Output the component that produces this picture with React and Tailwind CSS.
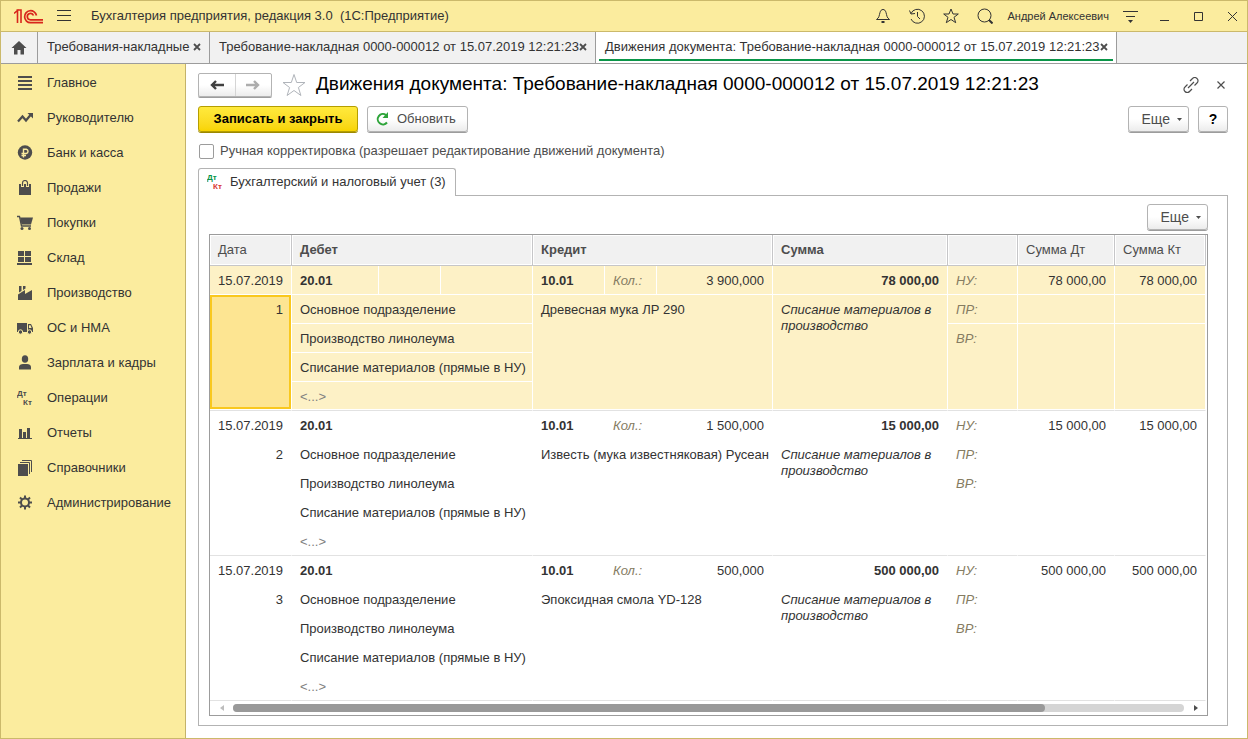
import { useState } from 'react'
import { clsx } from 'clsx'

const ENTRIES = [
  { id: 1, date: '15.07.2019', item: 'Древесная мука ЛР 290', qty: '3 900,000', sum: '78 000,00' },
  { id: 2, date: '15.07.2019', item: 'Известь (мука известняковая) Русеан', qty: '1 500,000', sum: '15 000,00' },
  { id: 3, date: '15.07.2019', item: 'Эпоксидная смола YD-128', qty: '500,000', sum: '500 000,00' },
]

const Icon = ({ size = 16, children, ...rest }) => (
  <svg width={size} height={size} viewBox={`0 0 ${size} ${size}`} fill="none" aria-hidden="true" className="shrink-0" {...rest}>
    {children}
  </svg>
)

const DtKt = ({ dt = '#4d4d4d', kt = '#4d4d4d' }) => (
  <svg
    width="17"
    height="19"
    viewBox="0 0 17 19"
    className="-mr-px shrink-0"
    aria-hidden="true"
    fontFamily="Liberation Sans, Arial, sans-serif"
    fontSize="8"
    fontWeight="700"
  >
    <text x="0" y="8" fill={dt}>Дт</text>
    <text x="6" y="17" fill={kt}>Кт</text>
  </svg>
)

const MENU = [
  {
    label: 'Главное',
    icon: <Icon><path d="M1 1h14v2H1zM1 5h14v2H1zM1 9h14v2H1zM1 13h14v2H1z" fill="#4d4d4d" /></Icon>,
  },
  {
    label: 'Руководителю',
    icon: (
      <Icon>
        <path d="M1 11.500l4.500-5 3.500 4 4.500-5.500" stroke="#4d4d4d" strokeWidth="2.200" />
        <path d="M10.500 3H16v5.500z" fill="#4d4d4d" />
      </Icon>
    ),
  },
  {
    label: 'Банк и касса',
    icon: (
      <Icon>
        <circle cx="8" cy="7.500" r="7.200" fill="#4d4d4d" />
        <path d="M6.500 12.500V4.200h2.800a2.200 2.200 0 010 4.300H4.500M4.500 10.500h4.500" stroke="#fbec9e" strokeWidth="1.400" />
      </Icon>
    ),
  },
  {
    label: 'Продажи',
    icon: (
      <Icon>
        <path d="M2 4h12v11H2z" fill="#4d4d4d" />
        <path d="M5.500 7V3a2.500 2.500 0 015 0v4" stroke="#fbec9e" strokeWidth="3" />
        <path d="M5.500 6V3a2.500 2.500 0 015 0v3" stroke="#4d4d4d" strokeWidth="1.200" />
      </Icon>
    ),
  },
  {
    label: 'Покупки',
    icon: (
      <Icon>
        <path d="M0 1.500h2.500l2 9.500h9.500" stroke="#4d4d4d" strokeWidth="1.300" />
        <path d="M3 2.500h13l-2 7H4.500z" fill="#4d4d4d" />
        <circle cx="5" cy="13.500" r="1.500" fill="#4d4d4d" />
        <circle cx="12.500" cy="13.500" r="1.500" fill="#4d4d4d" />
      </Icon>
    ),
  },
  {
    label: 'Склад',
    icon: <Icon><path d="M1 1h6v5H1zM8 1h6v5H8zM1 7h6v5H1zM8 7h6v5H8zM0 13h15v2H0z" fill="#4d4d4d" /></Icon>,
  },
  {
    label: 'Производство',
    icon: <Icon><path d="M1 15V9.500L8 5v4l7-4v10zM2 1h2.500v5L2 7.500zM6 1h2.500v2.500L6 5z" fill="#4d4d4d" /></Icon>,
  },
  {
    label: 'ОС и НМА',
    icon: (
      <Icon>
        <path d="M0 3h10v9H0zM11 4h3l2 4v4h-5z" fill="#4d4d4d" />
        <path d="M12 5.200h1.500L14.600 8H12z" fill="#fbec9e" />
        <circle cx="3.500" cy="12" r="2.200" fill="#4d4d4d" stroke="#fbec9e" />
        <circle cx="12.500" cy="12" r="2.200" fill="#4d4d4d" stroke="#fbec9e" />
      </Icon>
    ),
  },
  {
    label: 'Зарплата и кадры',
    icon: (
      <Icon>
        <ellipse cx="8" cy="4" rx="3.200" ry="3.800" fill="#4d4d4d" />
        <path d="M2 14.500v-2.500c0-2 2-3 4-3h4c2 0 4 1 4 3v2.500z" fill="#4d4d4d" />
      </Icon>
    ),
  },
  { label: 'Операции', icon: <DtKt /> },
  {
    label: 'Отчеты',
    icon: <Icon><path d="M2 4h3v9H2zM6 7h3v6H6zM10 3h3v10h-3zM1 13h14v1H1z" fill="#4d4d4d" /></Icon>,
  },
  {
    label: 'Справочники',
    icon: (
      <Icon>
        <path d="M1 4h10v12H1z" fill="#4d4d4d" />
        <path d="M3 2.500h9.500V14M5 .5h9.500V12" stroke="#4d4d4d" />
      </Icon>
    ),
  },
  {
    label: 'Администрирование',
    icon: (
      <Icon>
        <circle cx="8" cy="7.500" r="4" stroke="#4d4d4d" strokeWidth="2" />
        <path
          d="M8 .5v3M8 11.500v3M1 7.500h3M12 7.500h3M3 2.500l2.200 2.200M10.800 10.300L13 12.500M3 12.500l2.200-2.200M10.800 4.700L13 2.500"
          stroke="#4d4d4d"
          strokeWidth="2"
        />
      </Icon>
    ),
  },
]

const TABS = [
  { id: 'list', label: 'Требования-накладные', width: 'w-[172px]' },
  { id: 'doc', label: 'Требование-накладная 0000-000012 от 15.07.2019 12:21:23', width: 'w-[386px]' },
  { id: 'moves', label: 'Движения документа: Требование-накладная 0000-000012 от 15.07.2019 12:21:23', width: 'w-[521px]' },
]

const BUTTON =
  'h-[26px] shrink-0 rounded-[3px] border border-[#b3b3b3] bg-linear-to-b from-white from-50% to-[#ececec] shadow-[0_1px_0_#9c9c9c]'

const MoreButton = () => (
  <button className={clsx(BUTTON, 'mb-px flex w-[61px] items-center justify-end gap-[7px] pr-1.5 text-[14px] text-[#4d4d4d]')}>
    Еще
    <svg width="5" height="3" viewBox="0 0 5 3" aria-hidden="true"><path d="M0 0h5L2.500 3z" fill="#4d4d4d" /></svg>
  </button>
)

const TitleBar = () => (
  <header className="flex h-[31px] items-center border-b border-[#cbb96b] bg-[#fbec9e] pr-[7px] pl-[13px]">
    <svg width="30" height="15" viewBox="0 0 30 15" fill="none" stroke="#d8261c" aria-label="1С">
      <path d="M0 4.500L3.500 1.500V14M2.500 1h4.500v13" strokeWidth="1.600" />
      <path d="M22.500 6.500A6 6 0 1016.500 13.700H29" strokeWidth="1.700" />
      <path d="M19.500 6.500A3.200 3.200 0 1016.500 10.800H29" strokeWidth="1.700" />
    </svg>
    <button aria-label="Меню" className="ml-[13px]">
      <Icon><path d="M0 2.500h14M0 7.500h14M0 12.500h14" stroke="#333" /></Icon>
    </button>
    <span className="ml-4.5 flex-1 whitespace-pre text-[13px]">Бухгалтерия предприятия, редакция 3.0  (1С:Предприятие)</span>
    <div className="flex items-center gap-4.5">
      <button aria-label="Уведомления">
        <Icon stroke="#333"><path d="M1.500 11.500h13c-3-2-2.500-4-3.500-7C10.500 2.500 9.500 1.500 8 1.500S5.500 2.500 5 4.500c-1 3-.5 5-3.500 7z" /><path d="M6.500 14h3" strokeWidth="2" /></Icon>
      </button>
      <button aria-label="История">
        <Icon stroke="#333"><path d="M2 5.500A7 7 0 112 11" /><path d="M.5 2.500L2 6l4-.5M8.500 4v4.500L11 11" /></Icon>
      </button>
      <button aria-label="Избранное">
        <Icon stroke="#333"><path d="M8 1l2 5h5.300L11 9.300l1.700 5.400L8 11.500l-4.700 3.200L5 9.300.7 6H6z" /></Icon>
      </button>
      <button aria-label="Поиск">
        <Icon stroke="#333"><circle cx="7.500" cy="7.500" r="6.500" /><path d="M12 12l3.500 3.500" strokeWidth="2" /></Icon>
      </button>
    </div>
    <span className="ml-3.5 text-[11px]">Андрей Алексеевич</span>
    <div className="ml-[13px] flex items-center gap-4.5">
      <button aria-label="Сервис">
        <Icon><path d="M1 3.500h15M4 8.500h9" stroke="#333" /><path d="M6 12h5l-2.500 3z" fill="#333" /></Icon>
      </button>
      <button aria-label="Свернуть"><Icon><path d="M4 12.500h9" stroke="#333" /></Icon></button>
      <button aria-label="Развернуть"><Icon><path d="M4.500 4.500h8v8h-8z" stroke="#333" /></Icon></button>
      <button aria-label="Закрыть"><Icon><path d="M4 4l9 9M13 4l-9 9" stroke="#333" /></Icon></button>
    </div>
  </header>
)

const TabBar = ({ active, onSelect }) => (
  <nav className="flex h-8 border-b border-[#9c9c9c] bg-[#f1f1f1]">
    <button aria-label="Начальная страница" className="flex w-[37px] items-center justify-center border-r border-[#9c9c9c]">
      <Icon><path d="M8 1l7.500 7H13v6.500H9.500V10h-3v4.500H3V8H.5z" fill="#4d4d4d" /></Icon>
    </button>
    {TABS.map((tab) => (
      <div
        key={tab.id}
        className={clsx('flex border-r border-[#9c9c9c] px-[3px] pb-0.5', tab.width, tab.id === active && 'bg-white')}
      >
        <div className={clsx('flex flex-1 items-center justify-between border-b-2 pt-[3px] pr-[5px] pl-1.5', tab.id === active ? 'border-[#0a9548]' : 'border-transparent')}>
          <button onClick={() => onSelect(tab.id)} className="text-[13px] whitespace-nowrap">{tab.label}</button>
          <button aria-label="Закрыть вкладку">
            <Icon size={8}><path d="M1 1l6 6M7 1L1 7" stroke="#4d4d4d" strokeWidth="1.800" /></Icon>
          </button>
        </div>
      </div>
    ))}
  </nav>
)

const Sidebar = () => (
  <nav className="w-[185px] shrink-0 border-r border-[#c4b36a] bg-[#fbec9e] pt-px">
    {MENU.map((item) => (
      <a key={item.label} href="#" className="flex h-[35px] items-center gap-3.5 pl-4 text-[13px]">
        {item.icon}
        {item.label}
      </a>
    ))}
  </nav>
)

const Th = ({ bold, className, ...rest }) => (
  <th
    className={clsx(
      'h-[31px] border-r border-b border-[#c6c6c8] bg-[#f1f1f1] px-2 text-left text-[#4d4d4d] shadow-[inset_0_0_0_1px_#fff]',
      bold ? 'font-bold' : 'font-normal',
      className
    )}
    {...rest}
  />
)

const Td = ({ last, className, ...rest }) => (
  <td
    className={clsx(
      'border-r border-b border-r-white px-2 pt-[7px] pb-[5px] align-top',
      last ? 'border-b-[#e2e2e2] shadow-[inset_0_-1px_0_#fff]' : 'border-b-white',
      className
    )}
    {...rest}
  />
)

const Entry = ({ entry, selected, onSelect }) => {
  const label = 'italic text-[#857c62]'
  return (
    <tbody onClick={onSelect} className={clsx(selected && 'bg-[#fdf1c6]')}>
      <tr>
        <Td className="text-right">{entry.date}</Td>
        <Td className="font-bold">20.01</Td>
        <Td />
        <Td />
        <Td className="font-bold">10.01</Td>
        <Td className={label}>Кол.:</Td>
        <Td className="text-right">{entry.qty}</Td>
        <Td className="text-right font-bold">{entry.sum}</Td>
        <Td className={label}>НУ:</Td>
        <Td className="text-right">{entry.sum}</Td>
        <Td className="text-right">{entry.sum}</Td>
      </tr>
      <tr>
        {selected ? (
          <td
            rowSpan={4}
            className="border-r border-b border-r-white border-b-[#e2e2e2] bg-[#fde592] px-2 pt-[7px] pb-[5px] text-right align-top shadow-[inset_0_-1px_0_#fff,inset_0_-3px_0_#f9c81e,inset_0_0_0_2px_#f9c81e]"
          >
            {entry.id}
          </td>
        ) : (
          <Td last rowSpan={4} className="text-right">{entry.id}</Td>
        )}
        <Td colSpan={3}>Основное подразделение</Td>
        <Td last colSpan={3} rowSpan={4} className="whitespace-nowrap">{entry.item}</Td>
        <Td last rowSpan={4} className="italic">Списание материалов в производство</Td>
        <Td className={label}>ПР:</Td>
        <Td />
        <Td />
      </tr>
      <tr>
        <Td colSpan={3}>Производство линолеума</Td>
        <Td last rowSpan={3} className={label}>ВР:</Td>
        <Td last rowSpan={3} />
        <Td last rowSpan={3} />
      </tr>
      <tr>
        <Td colSpan={3} className="whitespace-nowrap">Списание материалов (прямые в НУ)</Td>
      </tr>
      <tr>
        <Td last colSpan={3} className="text-[#808080]">&lt;...&gt;</Td>
      </tr>
    </tbody>
  )
}

const EntriesTable = () => {
  const [selected, setSelected] = useState(1)

  return (
    <div className="mt-[3px] border border-[#9c9c9c]">
      <div className="pr-px">
        <table className="w-full table-fixed border-separate border-spacing-0 text-[13px] leading-4">
          <colgroup>
            <col className="w-[82px]" />
            <col className="w-[87px]" />
            <col className="w-[62px]" />
            <col className="w-[92px]" />
            <col className="w-[72px]" />
            <col className="w-[52px]" />
            <col />
            <col className="w-[175px]" />
            <col className="w-[70px]" />
            <col className="w-[97px]" />
            <col className="w-[91px]" />
          </colgroup>
          <thead>
            <tr>
              <Th>Дата</Th>
              <Th bold colSpan={3}>Дебет</Th>
              <Th bold colSpan={3}>Кредит</Th>
              <Th bold>Сумма</Th>
              <Th />
              <Th>Сумма Дт</Th>
              <Th>Сумма Кт</Th>
            </tr>
          </thead>
          {ENTRIES.map((entry) => (
            <Entry key={entry.id} entry={entry} selected={entry.id === selected} onSelect={() => setSelected(entry.id)} />
          ))}
        </table>
      </div>

      {/* Horizontal scroll */}
      <div className="flex h-3.5 items-center">
        <button aria-label="Прокрутить влево" className="flex w-[23px] justify-center">
          <svg width="4" height="6" viewBox="0 0 4 6" aria-hidden="true"><path d="M4 0v6L0 3z" fill="#bdbdbd" /></svg>
        </button>
        <div className="h-2 flex-1 rounded-full bg-[#d5d5d5]">
          <div className="h-2 w-[85.4%] rounded-full bg-[#999]" />
        </div>
        <button aria-label="Прокрутить вправо" className="flex w-[23px] justify-center">
          <svg width="4" height="6" viewBox="0 0 4 6" aria-hidden="true"><path d="M0 0v6l4-3z" fill="#4d4d4d" /></svg>
        </button>
      </div>
    </div>
  )
}

const DocumentPage = () => (
  <main className="min-w-0 flex-1 bg-white pt-2 pr-[19px] pb-3 pl-3">
    <div className="flex h-[25px] items-center">
      <div className="flex h-6 w-[74px] rounded-[2px] border border-[#b3b3b3] bg-linear-to-b from-white from-50% to-[#ececec] shadow-[0_1px_0_#9c9c9c]">
        <button aria-label="Назад" className="flex flex-1 items-center justify-center border-r border-[#d5d5d5]">
          <Icon><path d="M15 8H3M7 4L3 8l4 4" stroke="#404040" strokeWidth="2.400" /></Icon>
        </button>
        <button aria-label="Вперед" className="flex flex-1 items-center justify-center">
          <Icon><path d="M1 8h12M9 4l4 4-4 4" stroke="#adadad" strokeWidth="2.400" /></Icon>
        </button>
      </div>
      <button aria-label="В избранное" className="ml-2.5">
        <Icon size={24}><path d="M12 1.500l2.700 8h8.300l-6.600 5 2.500 8-6.900-5-6.900 5 2.500-8-6.600-5h8.300z" stroke="#b0b4ba" /></Icon>
      </button>
      <h1 className="ml-2.5 flex-1 text-[19px] whitespace-nowrap text-black">
        Движения документа: Требование-накладная 0000-000012 от 15.07.2019 12:21:23
      </h1>
      <button aria-label="Получить ссылку">
        <Icon>
          <path
            d="M7 4l2.500-2.500a3 3 0 014.500 0 3 3 0 010 4.500L11.500 8.500M9 12l-2.500 2.500a3 3 0 01-4.500 0A3 3 0 012 10l2.500-2.500M5 11l6-6"
            stroke="#4d4d4d"
            strokeWidth="1.200"
          />
        </Icon>
      </button>
      <button aria-label="Закрыть" className="mr-[3px] ml-[18px]">
        <Icon size={8}><path d="M.5.5l7 7M7.500.5l-7 7" stroke="#4d4d4d" strokeWidth="1.200" /></Icon>
      </button>
    </div>

    {/* Commands */}
    <div className="mt-[9px] flex h-[27px] items-start gap-[9px]">
      <button className="h-[26px] w-40 rounded-[3px] border border-[#b59e00] bg-linear-to-b from-[#ffea3c] to-[#f8d400] text-[13px] font-bold text-black shadow-[0_1px_0_#9c8800]">
        Записать и закрыть
      </button>
      <button className={clsx(BUTTON, 'flex w-[101px] items-center gap-1.5 pl-[7px] text-[13px] text-[#4d4d4d]')}>
        <Icon><path d="M12 11.500A5.200 5.200 0 1111 4" stroke="#2ea43a" strokeWidth="2" /><path d="M13 1v6H7.500z" fill="#2ea43a" /></Icon>
        Обновить
      </button>
      <div className="ml-auto flex gap-[9px]">
        <MoreButton />
        <button className={clsx(BUTTON, 'w-[30px] text-[14px] font-bold text-black')}>?</button>
      </div>
    </div>

    <label className="mt-2.5 flex h-4 items-center gap-1.5 pl-px text-[13px] text-[#4d4d4d]">
      <input type="checkbox" className="size-[15px] appearance-none rounded-[2px] border border-[#9c9c9c] bg-white checked:bg-[#fbec9e]" />
      Ручная корректировка (разрешает редактирование движений документа)
    </label>

    <div className="mt-[9px] flex">
      <button className="relative -mb-px flex h-7 w-[258px] items-center gap-[7px] rounded-t-[3px] border border-b-0 border-[#b3b3b3] bg-white pb-0.5 pl-2 text-[13px] whitespace-nowrap">
        <DtKt dt="#0a9548" kt="#d8392f" />
        Бухгалтерский и налоговый учет (3)
      </button>
    </div>
    <section className="border border-[#b3b3b3] pt-2 pr-[19px] pb-[9px] pl-2.5">
      <div className="flex justify-end">
        <MoreButton />
      </div>
      <EntriesTable />
    </section>
  </main>
)

export default function App() {
  const [activeTab, setActiveTab] = useState('moves')

  return (
    <div className="flex min-h-screen flex-col border border-[#cbb96b] bg-white font-['Liberation_Sans',Arial,sans-serif] text-[#333]">
      <TitleBar />
      <TabBar active={activeTab} onSelect={setActiveTab} />
      <div className="flex flex-1">
        <Sidebar />
        <DocumentPage />
      </div>
    </div>
  )
}
